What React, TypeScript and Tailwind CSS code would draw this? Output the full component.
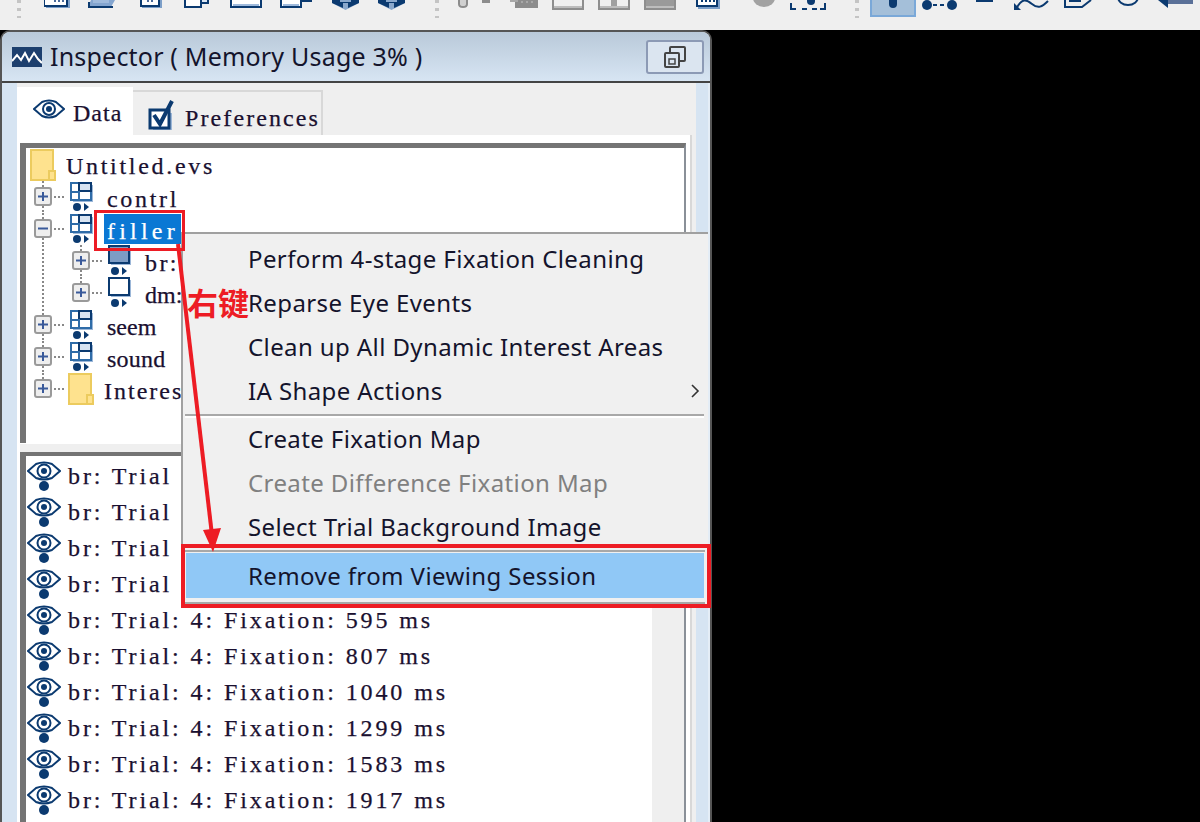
import React from "react";

const navy = "#0b3a70";
const mono = "font-['Liberation_Serif',serif] text-[24px] leading-none whitespace-pre text-[#1a1030] [-webkit-text-stroke:0.25px]";

function Grip({ className }: { className: string }) {
  return (
    <svg className={className} width="6" height="18">
      <rect x="1" y="0" width="4" height="3" fill="#c4c4c4" />
      <rect x="1" y="8" width="4" height="3" fill="#c4c4c4" />
      <rect x="1" y="16" width="4" height="2" fill="#c4c4c4" />
    </svg>
  );
}

function Toolbar() {
  return (
    <div className="flex h-[30px] shrink-0 items-start overflow-hidden bg-[#efefef]">
      <Grip className="ml-[16px] shrink-0" />
      <svg className="ml-[22px] shrink-0" width="26" height="9">
        <rect x="2" y="0" width="24" height="8" fill="#7d9fc8" />
        <rect x="0" y="-3" width="23" height="9" fill="#fff" stroke={navy} strokeWidth="2" />
        <path d="M10 1h2M14 1h2M18 1h2" stroke="#4a6a9a" strokeWidth="2" />
      </svg>
      <svg className="ml-[18px] shrink-0" width="27" height="8">
        <path d="M0 7 L3 0 H27 L23 7 Z" fill="#84a5cf" />
        <path d="M0 7 H25 M1 7 V2" stroke={navy} strokeWidth="2" fill="none" />
        <rect x="5" y="0" width="16" height="3" fill="#9fbadc" />
      </svg>
      <svg className="ml-[25px] shrink-0" width="22" height="9">
        <rect x="2" y="0" width="20" height="8" fill="#7d9fc8" />
        <rect x="1" y="-3" width="18" height="9" fill="#fff" stroke={navy} strokeWidth="2" />
        <path d="M7 1h2M11 1h2" stroke="#4a6a9a" strokeWidth="2" />
      </svg>
      <svg className="ml-[22px] shrink-0" width="26" height="8">
        <rect x="6" y="-4" width="18" height="7" fill="#dce7f4" stroke={navy} strokeWidth="2" />
        <rect x="1" y="-2" width="16" height="9" fill="#fff" stroke={navy} strokeWidth="2" />
      </svg>
      <svg className="ml-[20px] shrink-0" width="32" height="8">
        <rect x="1" y="-3" width="30" height="10" fill="#fff" stroke={navy} strokeWidth="2" />
        <rect x="3" y="4" width="26" height="2" fill="#9fbadc" />
      </svg>
      <svg className="ml-[18px] shrink-0" width="32" height="8">
        <rect x="1" y="-3" width="20" height="10" fill="#fff" stroke={navy} strokeWidth="2" />
        <path d="M21 1 H32" stroke={navy} strokeWidth="2" />
        <rect x="3" y="4" width="16" height="2" fill="#9fbadc" />
      </svg>
      <svg className="ml-[20px] shrink-0" width="27" height="10">
        <path d="M0 0 H27 V3 L13.5 10 L0 3 Z" fill="#8aa8cc" />
        <path d="M0 0 V3 L11 8 V3 H16 V8 L27 3 V0 H19 V2 H8 V0 Z" fill={navy} />
      </svg>
      <svg className="ml-[19px] shrink-0" width="27" height="10">
        <path d="M0 0 H27 V3 L13.5 10 L0 3 Z" fill="#8aa8cc" />
        <path d="M0 0 V3 L11 8 V3 H16 V8 L27 3 V0 H19 V2 H8 V0 Z" fill={navy} />
      </svg>
      <Grip className="ml-[29px] shrink-0" />
      <svg className="ml-[18px] shrink-0" width="10" height="8">
        <path d="M1 0 V4 Q1 7 5 7 Q9 7 9 4 V0" fill="#d0d0d0" stroke="#8c8c8c" strokeWidth="2" />
      </svg>
      <svg className="ml-[14px] shrink-0" width="8" height="3">
        <rect width="8" height="3" fill="#8c8c8c" />
      </svg>
      <svg className="ml-[20px] shrink-0" width="28" height="8">
        <rect x="5" y="0" width="23" height="8" fill="#8c8c8c" />
        <rect x="0" y="0" width="8" height="2" fill="#a8a8a8" />
        <path d="M12 1v2M17 1v2M22 1v2" stroke="#a8a8a8" strokeWidth="2" />
      </svg>
      {[0, 1, 2].map((k) => (
        <svg key={k} className="ml-[14px] shrink-0" width="32" height="10">
          <rect x="0" y="-3" width="32" height="13" fill="#8e8e8e" />
          <rect x="2" y="-3" width="28" height="9" fill={k === 2 ? "#9a9a9a" : "#f0f0f0"} />
          <rect x="2" y="6" width="28" height="2" fill="#bdbdbd" />
          {k === 1 && <rect x="13" y="0" width="6" height="6" fill="#a0a0a0" />}
        </svg>
      ))}
      <svg className="ml-[20px] shrink-0" width="24" height="9">
        <rect x="2" y="0" width="22" height="9" fill="#7d9fc8" />
        <rect x="1" y="-3" width="20" height="9" fill="#fff" stroke={navy} strokeWidth="2" />
        <path d="M5 1h2M9 1h2M13 1h2M17 1h2" stroke={navy} strokeWidth="2" />
      </svg>
      <svg className="ml-[32px] shrink-0" width="24" height="7">
        <ellipse cx="12" cy="-2" rx="11" ry="9" fill="#a2a2a2" />
      </svg>
      <svg className="ml-[14px] shrink-0" width="36" height="10">
        <path d="M1 3 V9 H6 M12 9 H17 M22 9 H27 M30 9 H35 V3" stroke={navy} strokeWidth="2" fill="none" />
        <circle cx="21" cy="1" r="4" fill={navy} />
      </svg>
      <Grip className="ml-[28px] shrink-0" />
      <div className="ml-[10px] flex h-[17px] w-[46px] shrink-0 items-start justify-center border-b-2 border-l-2 border-r-2 border-[#7aa8d8] bg-[#a4bfd9]">
        <div className="h-[8px] w-[8px] rounded-b-full bg-[#0b3a70]" />
      </div>
      <svg className="ml-[6px] shrink-0" width="36" height="11">
        <circle cx="5" cy="5" r="5" fill={navy} />
        <circle cx="30" cy="5" r="5" fill={navy} />
        <path d="M11 5h4M18 5h4" stroke={navy} strokeWidth="2" />
      </svg>
      <svg className="ml-[18px] shrink-0" width="17" height="3">
        <rect width="17" height="2" fill={navy} />
      </svg>
      <svg className="ml-[21px] shrink-0" width="36" height="11">
        <path d="M2 9 C8 -2 12 -1 18 4 C24 9 28 7 34 1" stroke={navy} strokeWidth="2" fill="none" />
        <path d="M0 10 V3 L7 10 Z" fill={navy} />
      </svg>
      <svg className="ml-[14px] shrink-0" width="28" height="8">
        <path d="M1 0 V7 H18 L27 0" stroke={navy} strokeWidth="2" fill="none" />
        <rect x="5" y="0" width="12" height="2" fill={navy} />
      </svg>
      <svg className="ml-[24px] shrink-0" width="24" height="6">
        <ellipse cx="12" cy="-3" rx="10" ry="8" fill="none" stroke={navy} strokeWidth="2" />
      </svg>
      <svg className="ml-[18px] shrink-0" width="36" height="9">
        <rect x="8" y="0" width="27" height="4" fill="#5a7098" />
        <path d="M0 0 H10 V8 Z" fill={navy} />
      </svg>
    </div>
  );
}

function Expander({ open, down = true, up = true }: { open?: boolean; down?: boolean; up?: boolean }) {
  return (
    <svg className="shrink-0" width="30" height="32">
      {up && <line x1="9" y1="0" x2="9" y2="7" stroke="#888" strokeWidth="2" strokeDasharray="2 2" />}
      {down && <line x1="9" y1="25" x2="9" y2="32" stroke="#888" strokeWidth="2" strokeDasharray="2 2" />}
      <rect x="1" y="7" width="16" height="17" rx="2" fill="#eeeeee" stroke="#9a9a9a" strokeWidth="2" />
      <path d={open ? "M4 15.5H14" : "M4 15.5H14M9 11V20"} stroke="#3a5a9a" strokeWidth="2" />
      <line x1="20" y1="16" x2="30" y2="16" stroke="#888" strokeWidth="2" strokeDasharray="2 2" />
    </svg>
  );
}

function Dots({ x }: { x: number }) {
  return (
    <>
      <circle cx={x} cy="26" r="4" fill={navy} />
      <path d={`M${x + 7} 22 L${x + 12} 26 L${x + 7} 30 Z`} fill={navy} />
    </>
  );
}

function GroupIcon() {
  return (
    <svg className="shrink-0" width="24" height="32">
      <rect x="3" y="4" width="20" height="17" fill="#9cb7d8" />
      <rect x="1" y="2" width="20" height="17" fill="#fff" stroke="#2f6ca8" strokeWidth="2" />
      <rect x="9" y="2" width="12" height="8" fill="#d8e4f2" stroke={navy} strokeWidth="2" />
      <path d="M1 11H9V19" stroke="#2f6ca8" strokeWidth="2" fill="none" />
      <Dots x={7} />
    </svg>
  );
}

function SetIcon({ filled }: { filled?: boolean }) {
  return (
    <svg className="shrink-0" width="24" height="32">
      <rect x="3" y="3" width="20" height="17" fill="#9cb7d8" />
      <rect x="1" y="1" width="20" height="17" fill={filled ? "#7d9cc4" : "#fff"} stroke={navy} strokeWidth="2" />
      <Dots x={7} />
    </svg>
  );
}

function Folder() {
  return (
    <svg className="shrink-0" width="26" height="32">
      <path d="M1 1H23V22H25V31H1Z" fill="#fee28e" stroke="#eccb5e" strokeWidth="2" />
      <path d="M19 31V22H25" fill="none" stroke="#eccb5e" strokeWidth="2" />
    </svg>
  );
}

function Eye() {
  return (
    <svg className="shrink-0" width="34" height="36">
      <path d="M1 13 L9 6 Q17 3 25 6 L33 13 L25 20 Q17 23 9 20 Z" fill="#fff" stroke={navy} strokeWidth="2" />
      <circle cx="17" cy="13" r="6.5" fill="#fff" stroke={navy} strokeWidth="2" />
      <circle cx="17" cy="13" r="3" fill={navy} />
      <circle cx="17" cy="28" r="5" fill={navy} />
    </svg>
  );
}

const fixations = [595, 807, 1040, 1299, 1583, 1917];

function Tree() {
  return (
    <div className="h-[300px] shrink-0 border-t-[5px] border-l-[6px] border-r-2 border-[#747474] border-r-[#8a9098] bg-white">
      <div className="flex h-[33px] items-center pl-[4px]">
        <Folder />
        <span className={`ml-[10px] mt-[3px] tracking-[2.7px] ${mono}`}>Untitled.evs</span>
      </div>
      <div className="flex h-[32px] items-center pl-[8px]">
        <Expander up />
        <span className="ml-[6px]"><GroupIcon /></span>
        <span className={`ml-[13px] mt-[3px] tracking-[2.7px] ${mono}`}>contrl</span>
      </div>
      <div className="flex h-[32px] items-center pl-[8px]">
        <Expander open />
        <span className="ml-[6px]"><GroupIcon /></span>
        <span className={`ml-[10px] flex h-[30px] w-[77px] items-center bg-[#0a78d4] pl-[3px] pt-[3px] tracking-[4.2px] ${mono} !text-white`}>filler</span>
      </div>
      <div className="flex h-[32px] items-center pl-[8px]">
        <svg className="shrink-0" width="38" height="32">
          <line x1="9" y1="0" x2="9" y2="32" stroke="#888" strokeWidth="2" strokeDasharray="2 2" />
        </svg>
        <Expander />
        <span className="ml-[6px]"><SetIcon filled /></span>
        <span className={`ml-[13px] mt-[3px] tracking-[2.4px] ${mono}`}>br:</span>
      </div>
      <div className="flex h-[32px] items-center pl-[8px]">
        <svg className="shrink-0" width="38" height="32">
          <line x1="9" y1="0" x2="9" y2="32" stroke="#888" strokeWidth="2" strokeDasharray="2 2" />
        </svg>
        <Expander down={false} />
        <span className="ml-[6px]"><SetIcon /></span>
        <span className={`ml-[13px] mt-[3px] ${mono}`}>dm:</span>
      </div>
      <div className="flex h-[32px] items-center pl-[8px]">
        <Expander />
        <span className="ml-[6px]"><GroupIcon /></span>
        <span className={`ml-[13px] mt-[3px] ${mono}`}>seem</span>
      </div>
      <div className="flex h-[32px] items-center pl-[8px]">
        <Expander />
        <span className="ml-[6px]"><GroupIcon /></span>
        <span className={`ml-[13px] mt-[3px] tracking-[0.2px] ${mono}`}>sound</span>
      </div>
      <div className="flex h-[32px] items-center pl-[8px]">
        <Expander down={false} />
        <span className="ml-[4px]"><Folder /></span>
        <span className={`ml-[10px] mt-[3px] tracking-[2px] ${mono}`}>Interes</span>
      </div>
    </div>
  );
}

function ListRow({ text }: { text: string }) {
  return (
    <div className="flex h-[36px] items-center">
      <Eye />
      <span className={`ml-[7px] tracking-[2.9px] ${mono}`}>{text}</span>
    </div>
  );
}

function FixationList() {
  return (
    <div className="flex min-h-0 flex-1 border-t-[4px] border-l-[6px] border-r-2 border-[#747474] border-r-[#8a9098] bg-[#efefef]">
      <div className="w-[626px] shrink-0 overflow-hidden bg-white pt-[2px] pl-px">
        {[0, 1, 2, 3].map((k) => (
          <ListRow key={k} text="br: Trial" />
        ))}
        {fixations.map((ms) => (
          <ListRow key={ms} text={`br: Trial: 4: Fixation: ${ms} ms`} />
        ))}
      </div>
    </div>
  );
}

function ContextMenu() {
  const item = "flex h-[44px] items-center pl-[65px] pr-[8px] justify-between";
  return (
    <div className="absolute left-[181px] top-[232px] h-[376px] w-[527px] border-t-2 border-l-2 border-[#a0a0a0] bg-[#f0f0f0] font-['Noto_Sans',sans-serif] text-[24px] leading-none tracking-[0.4px] text-[#14142c]">
      <div className="pt-[3px]">
        <div className={item}>Perform 4-stage Fixation Cleaning</div>
        <div className={item}>Reparse Eye Events</div>
        <div className={item}>Clean up All Dynamic Interest Areas</div>
        <div className={item}>
          <span>IA Shape Actions</span>
          <svg width="10" height="16">
            <path d="M2 2 L8 8 L2 14" fill="none" stroke="#333" strokeWidth="1.6" />
          </svg>
        </div>
      </div>
      <div className="mt-[1px] ml-[2px] mr-[4px] border-t-2 border-b-2 border-t-[#a8a8a8] border-b-white" />
      <div className="-mt-[1px]">
        <div className={item}>Create Fixation Map</div>
        <div className={`${item} text-[#808080]`}>Create Difference Fixation Map</div>
        <div className={item}>Select Trial Background Image</div>
      </div>
      <div className="mt-[1px] ml-[2px] mr-[3px] h-[2px] bg-[#a8a8a8]" />
      <div className="ml-[3px] mr-[4px] mt-[1px] flex h-[45px] items-center bg-[#90c8f6] pl-[62px]">Remove from Viewing Session</div>
      <div className="ml-[2px] mr-[3px] mt-[4px] h-[2px] bg-[#a8a8a8]" />
    </div>
  );
}

function Annotations() {
  return (
    <>
      <div className="absolute left-[94px] top-[210px] h-[41px] w-[91px] border-[3px] border-[#ed1c24]" />
      <div className="absolute left-[181px] top-[544px] h-[64px] w-[530px] border-[4px] border-[#ed1c24]" />
      <span className="absolute left-[187px] top-[282px] font-['Noto_Sans_CJK_SC',sans-serif] text-[31px] leading-[40px] font-bold text-[#ed1c24]">右键</span>
      <svg className="absolute left-[170px] top-[240px]" width="60" height="320">
        <line x1="8" y1="4" x2="42" y2="295" stroke="#ed1c24" strokeWidth="4" />
        <path d="M43 312 L33 290 L51 288 Z" fill="#ed1c24" />
      </svg>
    </>
  );
}

export default function App() {
  return (
    <div className="relative flex h-[822px] w-[1200px] flex-col overflow-hidden bg-black">
      <Toolbar />
      <div className="flex min-h-0 flex-1 flex-col">
        <div className="flex h-full w-[712px] flex-col overflow-hidden rounded-t-[10px] border-t-2 border-r-2 border-l-2 border-[#555] bg-[#efefef]">
          <div className="flex h-[51px] shrink-0 items-center border-b-2 border-[#444] bg-gradient-to-b from-[#b9c9d9] to-[#d7e5f3] pl-[10px] pr-[6px]">
            <svg className="shrink-0" width="30" height="20">
              <rect width="30" height="20" fill="#1d3f6e" />
              <path d="M0 14 L5 8 L9 13 L13 6 L17 14 L22 6 L26 12 L30 16" fill="none" stroke="#fff" strokeWidth="2" />
            </svg>
            <span className="ml-[8px] font-['Noto_Sans',sans-serif] text-[25px] leading-none tracking-[0.2px] text-[#14142c]">Inspector ( Memory Usage 3% )</span>
            <div className="ml-auto flex h-[34px] w-[58px] items-center justify-center rounded-[3px] border-2 border-[#8c9ab5] bg-[#dbe5f0]">
              <svg width="24" height="24">
                <rect x="7" y="2" width="15" height="14" rx="1" fill="none" stroke="#444" strokeWidth="2" />
                <rect x="2" y="8" width="14" height="14" rx="1" fill="#dbe5f0" stroke="#444" strokeWidth="2" />
                <rect x="6" y="14" width="6" height="5" fill="none" stroke="#444" strokeWidth="1.5" />
              </svg>
            </div>
          </div>
          <div className="flex min-h-0 flex-1 bg-[#efefef]">
            <div className="w-[15px] shrink-0 bg-[#d6e4f2]" />
            <div className="flex w-[675px] shrink-0 flex-col">
              <div className="flex h-[52px] shrink-0 items-end">
                <div className="flex h-[48px] w-[116px] items-center bg-white pl-[16px]">
                  <svg className="-mt-[4px] shrink-0" width="32" height="20">
                    <path d="M1 10 L9 3 Q16 0 23 3 L31 10 L23 17 Q16 20 9 17 Z" fill="#fff" stroke={navy} strokeWidth="2" />
                    <circle cx="16" cy="10" r="6" fill="#fff" stroke={navy} strokeWidth="2" />
                    <circle cx="16" cy="10" r="3" fill={navy} />
                  </svg>
                  <span className={`ml-[8px] mt-[4px] tracking-[1px] ${mono}`}>Data</span>
                </div>
                <div className="flex h-[45px] w-[190px] items-center border-t-2 border-r-2 border-[#d8d8d8] bg-[#efefef] pl-[15px]">
                  <svg className="mt-[3px] shrink-0" width="28" height="30">
                    <rect x="5" y="13" width="19" height="17" fill="#9cb7d8" />
                    <rect x="2" y="10" width="19" height="18" fill="#fff" stroke={navy} strokeWidth="3" />
                    <path d="M6 15 L12 24 L24 1" fill="none" stroke={navy} strokeWidth="4" />
                  </svg>
                  <span className={`ml-[9px] mt-[8px] tracking-[2.1px] ${mono}`}>Preferences</span>
                </div>
              </div>
              <div className="flex min-h-0 flex-1 flex-col border-r-2 border-[#d8d8d8] bg-white pt-[8px] pl-[3px] pr-[4px] pb-0">
                <Tree />
                <div className="h-[9px] shrink-0 border-t border-white bg-[#efefef]" />
                <FixationList />
              </div>
            </div>
            <div className="w-[4px] shrink-0 bg-[#efefef]" />
            <div className="w-[12px] shrink-0 bg-[#d6e4f2]" />
            <div className="flex-1 bg-[#e4edf6]" />
          </div>
        </div>
      </div>
      <ContextMenu />
      <Annotations />
    </div>
  );
}
